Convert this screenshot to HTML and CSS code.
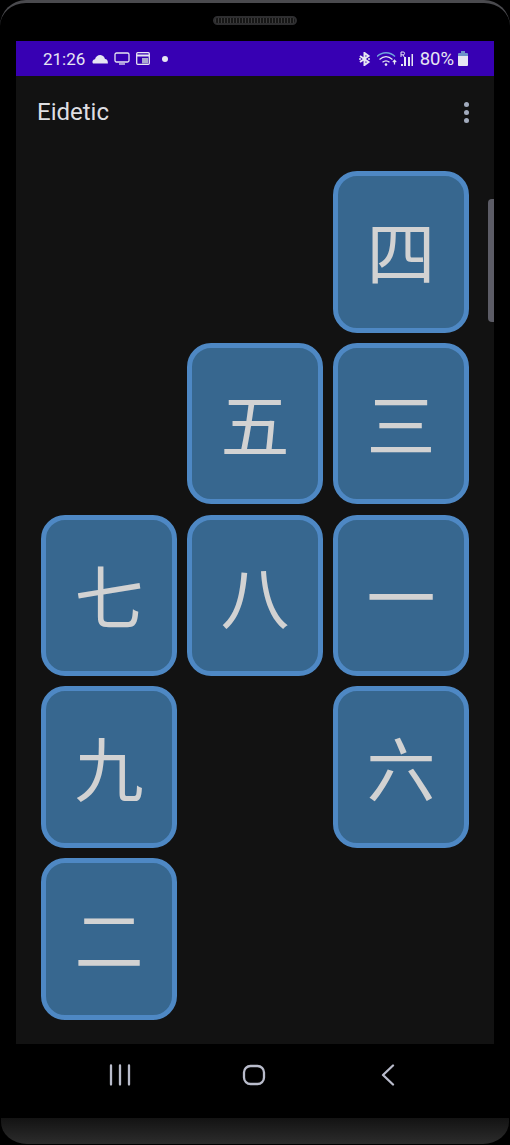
FILE: index.html
```html
<!DOCTYPE html>
<html lang="zh">

<head>
    <meta charset="UTF-8">
    <meta name="viewport" content="width=device-width, initial-scale=1.0">
    <title>Eidetic</title>
    <link rel="stylesheet" href="styles.css">
</head>

<body>
    <div class="phone">
        <div class="bezelTop">
            <div class="speaker"></div>
        </div>

        <div class="screen">
            <div class="statusBar">
                <div class="statusLeft">
                    <span class="clock">21:26</span>
                    <svg class="icon" width="16" height="10" viewBox="0 0 16 10">
                        <path d="M1 9.500C-.2 8 .6 5.500 3 5.300 3.600 2.500 6 .8 8.500 1c2.300.2 4 1.800 4.500 4 1.900.2 3 1.500 2.900 4.500z" fill="#e6e6f2" />
                    </svg>
                    <svg class="icon" width="16" height="13" viewBox="0 0 16 13">
                        <rect x="1" y="1" width="14" height="9" rx="1.500" fill="none" stroke="#e6e6f2" stroke-width="1.300" />
                        <path d="M5 12h6" stroke="#e6e6f2" stroke-width="1.300" />
                    </svg>
                    <svg class="icon" width="14" height="13" viewBox="0 0 14 13">
                        <rect x=".7" y=".7" width="12.600" height="11.600" rx="1" fill="none" stroke="#e6e6f2" stroke-width="1.300" />
                        <path d="M1 3.500h12" stroke="#e6e6f2" stroke-width="2" />
                        <rect x="6" y="6" width="6" height="5.500" fill="#a9a9cf" />
                    </svg>
                    <span class="dot"></span>
                </div>
                <div class="statusRight">
                    <svg class="icon" width="13" height="14" viewBox="0 0 13 14">
                        <path d="M2 4l8.500 6L6.500 13V1l4 3L2 10" fill="none" stroke="#e6e6f2" stroke-width="2" />
                        <path d="M1 7h2M10 7h2" stroke="#e6e6f2" stroke-width="1.600" />
                    </svg>
                    <svg class="icon wifi" width="20" height="14" viewBox="0 0 20 14">
                        <path d="M0 4.500c5-5 13-5 18 0" fill="none" stroke="#6fa6dc" stroke-width="1.300" />
                        <path d="M2.500 7.500c4-3.500 9-3.500 13 0M5.500 10.300c2-1.700 5-1.700 7 0" fill="none" stroke="#e6e6f2" stroke-width="1.300" />
                        <circle cx="9" cy="12.600" r="1.300" fill="#e6e6f2" />
                        <path d="M17.500 12.500V8.500M15.800 10.200l1.700-2 1.700 2" fill="none" stroke="#e6e6f2" stroke-width="1.200" />
                    </svg>
                    <svg class="icon signal" width="14" height="15" viewBox="0 0 14 15">
                        <path d="M1 15h2v-2H1zM4 15h2V6H4zM8 15h2V6H8zM11.500 15h1.500V3h-1.500z" fill="#e6e6f2" />
                        <path d="M1 6V1h2.200a1.300 1.300 0 0 1 0 2.800H1M3 4l1.200 2" fill="none" stroke="#e6e6f2" stroke-width="1" />
                    </svg>
                    <span class="battery">80%</span>
                    <svg class="icon" width="10" height="15" viewBox="0 0 10 15">
                        <path d="M3 0h4v2h2a1 1 0 0 1 1 1v2H0V3a1 1 0 0 1 1-1h2z" fill="#6f93c9" />
                        <path d="M0 5h10v9a1 1 0 0 1-1 1H1a1 1 0 0 1-1-1z" fill="#e6e6f2" />
                    </svg>
                </div>
            </div>

            <div class="appBar">
                <span class="title">Eidetic</span>
                <div class="menu">
                    <span></span>
                    <span></span>
                    <span></span>
                </div>
            </div>

            <div class="tiles">
                <div class="spacer"></div>
                <div class="spacer"></div>
                <div class="tile">四</div>

                <div class="spacer"></div>
                <div class="tile">五</div>
                <div class="tile">三</div>

                <div class="tile">七</div>
                <div class="tile">八</div>
                <div class="tile">一</div>

                <div class="tile">九</div>
                <div class="spacer"></div>
                <div class="tile">六</div>

                <div class="tile">二</div>
            </div>

            <div class="scrollThumb"></div>
        </div>

        <div class="navBar">
            <svg width="24" height="22" viewBox="0 0 24 22">
                <path d="M3 1.500v19M12 1.500v19M21 1.500v19" stroke="#b9bccb" stroke-width="2.300" stroke-linecap="round" />
            </svg>
            <svg width="24" height="22" viewBox="0 0 24 22">
                <rect x="2" y="2" width="20" height="18" rx="6.500" fill="none" stroke="#b9bccb" stroke-width="2.300" />
            </svg>
            <svg width="24" height="22" viewBox="0 0 24 22">
                <path d="M17 1.500L7 11 17 20.500" fill="none" stroke="#b9bccb" stroke-width="2.300" stroke-linecap="round" stroke-linejoin="round" />
            </svg>
        </div>

        <div class="chin"></div>
    </div>
</body>

</html>
```

FILE: styles.css
```css
* {
    margin: 0px;
    padding: 0px;
    box-sizing: border-box;
}

body {
    background-color: #000;
    font-family: Roboto, "Liberation Sans", sans-serif;
}

.phone {
    width: 510px;
    height: 1145px;
    display: flex;
    flex-direction: column;
    overflow: hidden;
}

.bezelTop {
    height: 41px;
    flex: none;
    border-top: 3px solid #4a4a4e;
    border-radius: 26px 26px 0 0;
    display: flex;
    justify-content: center;
    padding-top: 13px;
}

.speaker {
    width: 84px;
    height: 9px;
    border: 2px solid #2e2e30;
    border-radius: 5px;
    background: repeating-linear-gradient(90deg, #3a3a3a 0, #3a3a3a 1px, #161616 1px, #161616 3px);
}

.screen {
    height: 1003px;
    flex: none;
    margin: 0 16px;
    background-color: #121212;
    position: relative;
}

.statusBar {
    height: 35px;
    background-color: #3700b3;
    color: #e6e6f2;
    display: flex;
    justify-content: space-between;
    align-items: center;
    padding: 0 26px 0 27px;
    font-size: 17px;
}

.statusLeft,
.statusRight {
    display: flex;
    align-items: center;
}

.statusLeft .icon {
    margin-left: 6px;
}

.statusLeft .clock {
    margin-right: 1px;
}

.statusRight .icon {
    margin-left: 4px;
}

.statusRight .wifi {
    margin-left: 6px;
}

.statusRight .signal {
    margin-left: 3px;
}

.dot {
    width: 6px;
    height: 6px;
    border-radius: 50%;
    background-color: #e6e6f2;
    margin-left: 12px;
}

.battery {
    margin-left: 6px;
    font-size: 18.500px;
}

.appBar {
    height: 72px;
    display: flex;
    justify-content: space-between;
    align-items: center;
    padding: 0 25px 0 21px;
}

.title {
    font-size: 24px;
    color: #dfdfe2;
}

.menu {
    display: flex;
    flex-direction: column;
    gap: 3px;
}

.menu span {
    width: 5px;
    height: 5px;
    border-radius: 50%;
    background-color: #a2abbd;
}

.tiles {
    margin: 23px 25px 0;
    display: grid;
    grid-template-columns: repeat(3, 136px);
    grid-auto-rows: 161.500px;
    column-gap: 10px;
    row-gap: 10.250px;
}

.tile {
    background-color: #37678f;
    border: 5px solid #4e88c4;
    border-radius: 24px;
    color: #d2d2d2;
    font-family: "Noto Sans CJK SC", sans-serif;
    font-size: 69px;
    padding-bottom: 3px;
    display: flex;
    align-items: center;
    justify-content: center;
}

.scrollThumb {
    position: absolute;
    top: 158px;
    right: 0px;
    width: 6px;
    height: 123px;
    background-color: #5c5c66;
    border-radius: 4px 0 0 4px;
}

.navBar {
    height: 75px;
    flex: none;
    display: flex;
    align-items: center;
    gap: 110px;
    padding: 0 0 13px 108px;
}

.chin {
    flex: none;
    height: 26px;
    margin: -1px 1px 0;
    background: linear-gradient(#131313, #2c2c2c);
    border-radius: 0 0 26px 26px / 0 0 22px 22px;
}
```
